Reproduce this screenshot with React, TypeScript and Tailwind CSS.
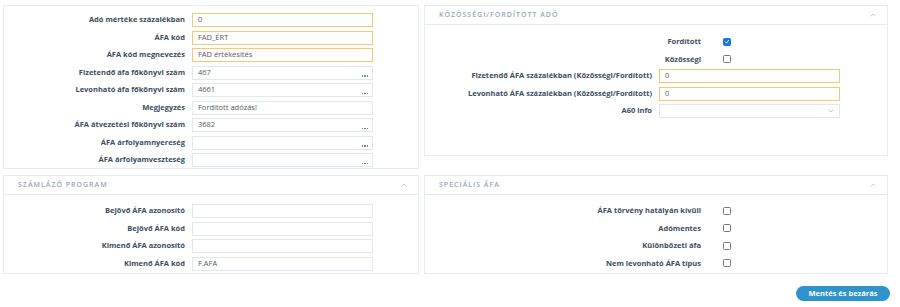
import { ChevronDown, ChevronUp } from 'lucide-react';
import type { ReactNode } from 'react';

const font = { fontFamily: '"Open Sans", "Liberation Sans", sans-serif' };

const Panel = ({ title, className, children }: { title?: string; className?: string; children: ReactNode }) => (
  <section className={`border border-[#e6ebf0] bg-white ${className ?? ''}`}>
    {title && (
      <header className="flex h-[19px] items-center justify-between border-b border-[#e6ebf0] pl-[14px] pr-[10px]">
        <span className="text-[7px] font-semibold uppercase tracking-[1px] text-[#98a6b6]">{title}</span>
        <ChevronUp className="size-[8px] text-[#a8b4c2]" strokeWidth={2} />
      </header>
    )}
    {children}
  </section>
);

const Dots = () => (
  <span className="absolute bottom-[2px] right-[4px] flex gap-[1px]">
    <span className="size-[1.5px] bg-[#7187a6]" />
    <span className="size-[1.5px] bg-[#7187a6]" />
    <span className="size-[1.5px] bg-[#7187a6]" />
  </span>
);

const Field = ({
  label,
  value = '',
  required,
  dots,
  select,
  labelW,
}: {
  label: string;
  value?: string;
  required?: boolean;
  dots?: boolean;
  select?: boolean;
  labelW: string;
}) => (
  <div className="flex items-center gap-[7px]">
    <span className={`${labelW} text-right text-[7.5px] font-bold leading-none text-[#3b4d5e]`}>{label}</span>
    <div
      className={`relative flex h-[14px] w-[181px] items-center border bg-white pl-[5px] text-[7.5px] text-[#555b61] ${
        required ? 'border-[#f6c970]' : 'border-[#e1e7ed]'
      }`}
    >
      {value}
      {dots && <Dots />}
      {select && <ChevronDown className="absolute right-[4px] size-[8px] text-[#8fb0d4]" strokeWidth={2} />}
    </div>
  </div>
);

const Check = ({ label, checked }: { label: string; checked?: boolean }) => (
  <div className="flex h-[17.5px] items-center">
    <span className="w-[276px] text-right text-[7.5px] font-bold leading-none text-[#3b4d5e]">{label}</span>
    <span
      className={`ml-[22px] flex size-[8px] items-center justify-center rounded-[1.5px] border ${
        checked ? 'border-[#1a73e8] bg-[#1a73e8]' : 'border-[#767676] bg-white'
      }`}
    >
      {checked && (
        <svg viewBox="0 0 10 10" className="size-[7px]">
          <path d="M2 5.2 L4.2 7.4 L8 2.8" fill="none" stroke="white" strokeWidth="1.6" />
        </svg>
      )}
    </span>
  </div>
);

export default function App() {
  return (
    <div className="h-[307px] w-[900px] bg-white" style={font}>
      <div className="grid grid-cols-[416px_464px] gap-x-[5px] gap-y-[6px] pl-[3px] pt-[5px]">
        <Panel className="h-[164px]">
          <div className="flex flex-col gap-[3.5px] pl-[2px] pt-[7px]">
            <Field labelW="w-[179px]" label="Adó mértéke százalékban" value="0" required />
            <Field labelW="w-[179px]" label="ÁFA kód" value="FAD_ÉRT" required />
            <Field labelW="w-[179px]" label="ÁFA kód megnevezés" value="FAD értékesítés" required />
            <Field labelW="w-[179px]" label="Fizetendő áfa főkönyvi szám" value="467" dots />
            <Field labelW="w-[179px]" label="Levonható áfa főkönyvi szám" value="4661" dots />
            <Field labelW="w-[179px]" label="Megjegyzés" value="Fordított adózás!" />
            <Field labelW="w-[179px]" label="ÁFA átvezetési főkönyvi szám" value="3682" dots />
            <Field labelW="w-[179px]" label="ÁFA árfolyamnyereség" dots />
            <Field labelW="w-[179px]" label="ÁFA árfolyamveszteség" dots />
          </div>
        </Panel>
        <Panel title="Közösségi/fordított adó" className="h-[151px]">
          <div className="pt-[8px]">
            <Check label="Fordított" checked />
            <Check label="Közösségi" />
            <div className="mt-[1px] flex flex-col gap-[3.5px]">
              <Field labelW="w-[227px]" label="Fizetendő ÁFA százalékban (Közösségi/Fordított)" value="0" required />
              <Field labelW="w-[227px]" label="Levonható ÁFA százalékban (Közösségi/Fordított)" value="0" required />
              <Field labelW="w-[227px]" label="A60 info" select />
            </div>
          </div>
        </Panel>
        <Panel title="Számlázó program" className="h-[99px]">
          <div className="flex flex-col gap-[3.5px] pl-[2px] pt-[9px]">
            <Field labelW="w-[179px]" label="Bejövő ÁFA azonosító" />
            <Field labelW="w-[179px]" label="Bejövő ÁFA kód" />
            <Field labelW="w-[179px]" label="Kimenő ÁFA azonosító" />
            <Field labelW="w-[179px]" label="Kimenő ÁFA kód" value="F.AFA" />
          </div>
        </Panel>
        <Panel title="Speciális áfa" className="h-[99px] self-start">
          <div className="pt-[7px]">
            <Check label="ÁFA törvény hatályán kívüli" />
            <Check label="Adómentes" />
            <Check label="Különbözeti áfa" />
            <Check label="Nem levonható ÁFA típus" />
          </div>
        </Panel>
      </div>
      <div className="flex justify-end pr-[10px] pt-[12px]">
        <button className="h-[15px] w-[94px] rounded-full bg-[#2f93cc] text-[7.5px] font-bold text-white">
          Mentés és bezárás
        </button>
      </div>
    </div>
  );
}
